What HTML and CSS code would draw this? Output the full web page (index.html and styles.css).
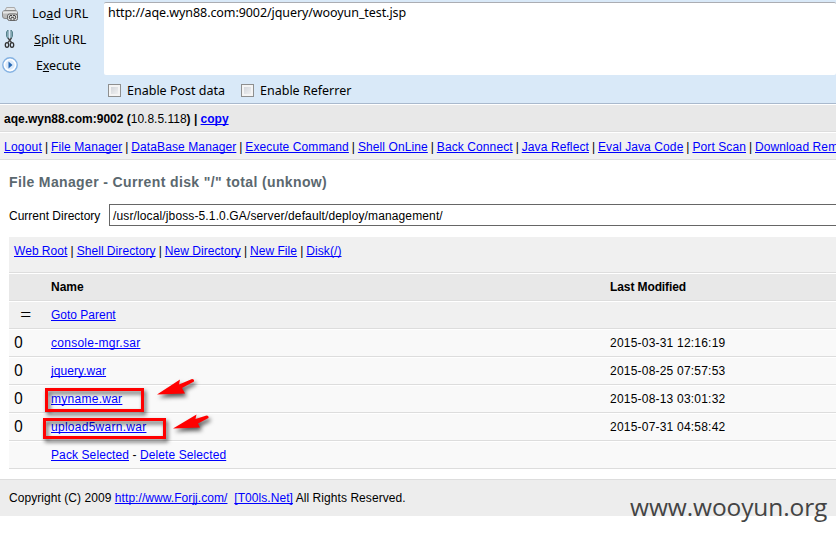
FILE: index.html
```html
<!DOCTYPE html>
<html lang="en">
<head>
<meta charset="utf-8">
<title>File Manager</title>
<link rel="stylesheet" href="styles.css">
</head>
<body>
<header class="hackbar">
  <div class="actions">
    <div class="action">
      <svg width="20" height="20" viewBox="0 0 20 20"><path d="M5 7 6.500 3.500h8L16 7" fill="#e6e7e8" stroke="#aaa"/><rect x="2.500" y="6.500" width="15" height="8" rx="2.500" fill="#bbb" stroke="#888"/><path d="M3 8.500h14" stroke="#e5e5e5" stroke-width="2"/><rect x="7.500" y="10" width="10" height="6.500" rx="2" fill="#ddd" stroke="#666"/><path d="M12 11.500h-2q-1.500 1.700 0 3.500h2m1-3.500h2q1.500 1.700 0 3.500h-2m-2-1.700h3" fill="none" stroke="#444"/></svg>
      <span class="load">Lo<u>a</u>d URL</span>
    </div>
    <div class="action">
      <svg width="20" height="20" viewBox="0 0 20 20"><path d="M6.500 2 8 0v8.500l-1.500-2zM12.500 2 11 0v8.500l1.500-2z" fill="#a9cbd1" stroke="#57818d"/><path d="m8 8 3.500 4.500m0-4.500L8 12.500" stroke="#444" stroke-width="1.300"/><ellipse cx="7" cy="15" rx="1.700" ry="2.300" fill="none" stroke="#333" stroke-width="1.300"/><ellipse cx="12" cy="15" rx="1.700" ry="2.300" fill="none" stroke="#333" stroke-width="1.300"/></svg>
      <span class="split"><u>S</u>plit URL</span>
    </div>
    <div class="action">
      <svg width="20" height="20" viewBox="0 0 20 20"><circle cx="10" cy="9" r="7.200" fill="#dceafa" stroke="#85b2e2" stroke-width="1.400"/><circle cx="10" cy="9" r="5.500" fill="none" stroke="#fff" stroke-width="1.500"/><path d="m8.500 5.500 4 3.500-4 3.500z" fill="#2869b4"/></svg>
      <span class="exec">E<u>x</u>ecute</span>
    </div>
  </div>
  <div class="request">
    <div class="url">http://aqe.wyn88.com:9002/jquery/wooyun_test.jsp</div>
    <div class="options">
      <span class="check"></span><span class="post">Enable Post data</span>
      <span class="check"></span><span class="referrer">Enable Referrer</span>
    </div>
  </div>
</header>
<div class="bar host"><b>aqe.wyn88.com:9002 (</b>10.8.5.118<b>) | <a class="copy" href="#">copy</a></b></div>
<nav class="bar menu"><a class="logout" href="#">Logout</a> | <a href="#">File Manager</a> | <a href="#">DataBase Manager</a> | <a href="#">Execute Command</a> | <a href="#">Shell OnLine</a> | <a href="#">Back Connect</a> | <a href="#">Java Reflect</a> | <a href="#">Eval Java Code</a> | <a href="#">Port Scan</a> | <a href="#">Download Rem</a></nav>
<main>
  <h2>File Manager - Current disk "/" total (unknow)</h2>
  <div class="directory"><span class="dirlabel">Current Directory</span><div class="path">/usr/local/jboss-5.1.0.GA/server/default/deploy/management/</div></div>
  <div class="files">
    <div class="tools"><a href="#">Web Root</a> | <a href="#">Shell Directory</a> | <a href="#">New Directory</a> | <a href="#">New File</a> | <a href="#">Disk(/)</a></div>
    <div class="row head"><span></span><span>Name</span><span class="modified">Last Modified</span></div>
    <div class="row parent"><span class="mark equals">=</span><span><a href="#">Goto Parent</a></span></div>
    <div class="row file"><span class="mark">0</span><span><a href="#">console-mgr.sar</a></span><span class="date">2015-03-31 12:16:19</span></div>
    <div class="row file"><span class="mark">0</span><span><a class="plain" href="#">jquery.war</a></span><span class="date">2015-08-25 07:57:53</span></div>
    <div class="row file"><span class="mark">0</span><span><a href="#">myname.war</a></span><span class="date">2015-08-13 03:01:32</span></div>
    <div class="row file"><span class="mark">0</span><span><a href="#">upload5warn.war</a></span><span class="date">2015-07-31 04:58:42</span></div>
    <div class="row"><span></span><span class="bulk"><a href="#">Pack Selected</a> - <a href="#">Delete Selected</a></span></div>
  </div>
</main>
<footer>Copyright (C) 2009 <a href="#">http://www.Forjj.com/</a> &nbsp;<a href="#">[T00ls.Net]</a> All Rights Reserved.</footer>
<svg class="marks" width="190" height="80" viewBox="0 0 190 80">
  <g class="shadowed">
    <path class="frame" d="M15.500 19.500h96v21h-96zM13.500 49.500h120v18h-120z"/>
    <path class="arrow" d="m126 24.500 23-15-1 5 13-5.500q2.500 0 2 2.500l-12 6.500 3 5.500z"/>
    <path class="arrow" d="m142 58.500 23.500-14-1 4.500 11-3.500q2.500 0 2 2.500l-10.500 5.500 2 4z"/>
  </g>
</svg>
<div class="watermark">www.wooyun.org</div>
</body>
</html>
```
FILE: styles.css
```css
* { box-sizing: border-box; }
body { margin: 0; width: 836px; height: 536px; overflow: hidden; position: relative; background: #fff; color: #000; font: 12px/26px "Liberation Sans", Arial, sans-serif; white-space: nowrap; }
a { color: #00f; text-decoration: underline; text-decoration-skip-ink: none; text-underline-offset: 1px; }
.hackbar { display: flex; height: 104px; background: #d9e9f8; border-bottom: 1px solid #a9b9cd; font: 12.5px/20px "Noto Sans", "Open Sans", sans-serif; }
.actions { width: 104px; padding-top: 4px; }
.action { display: flex; height: 26px; align-items: flex-start; }
.action svg { width: 20px; flex: none; }
.action span { display: block; }
.load { margin-left: 12px; letter-spacing: 0.1px; }
.split { margin-left: 14px; }
.exec { margin-left: 16px; letter-spacing: -0.15px; }
.request { flex: 1; padding-top: 2px; }
.url { height: 73px; padding: 0 4px; background: #fff; border-top: 1px solid #abadb3; border-radius: 2px; letter-spacing: -0.08px; }
.options { display: flex; align-items: center; height: 28px; padding: 3px 0 0 4px; }
.check { width: 13px; height: 13px; border: 1px solid #8e8f8f; background: linear-gradient(135deg, #cbcfd5, #f6f6f6); box-shadow: inset 0 0 0 2px #f4f4f4; }
.post { width: 98px; margin: 0 16px 0 6px; }
.referrer { margin-left: 6px; }
.bar { height: 28px; padding: 1px 4px 0; border-top: 1px solid #fff; border-bottom: 1px solid #ddd; line-height: 26px; }
.host { background: #e8e8e8; }
.menu { background: #f0f0f0; word-spacing: -0.4px; }
.menu a { word-spacing: 0; letter-spacing: 0.1px; }
.menu .logout { letter-spacing: 0.23px; }
main { height: 319px; padding: 10px 0 0 9px; }
h2 { margin: 0; height: 34px; font-size: 14px; line-height: 24px; letter-spacing: 0.37px; color: #5b686f; }
.directory { display: flex; height: 22px; line-height: 24px; }
.dirlabel { width: 100px; }
.path { flex: 1; padding-left: 3px; border: 1px solid #666; border-right: 0; line-height: 22px; letter-spacing: 0.13px; }
.files { margin-top: 11px; }
.tools { height: 36px; padding: 1px 5px; background: #f0f0f0; border-bottom: 1px solid #ddd; word-spacing: -0.3px; }
.tools a { letter-spacing: 0.08px; }
.row { display: grid; grid-template-columns: 42px 559px 1fr; height: 28px; background: #f9f9f9; border-top: 1px solid #fff; border-bottom: 1px solid #ddd; }
.head { background: #e8e8e8; font-weight: bold; }
.modified { letter-spacing: -0.1px; }
.parent { background: #f0f0f0; }
.file a { letter-spacing: 0.27px; }
.file .plain { letter-spacing: 0.06px; }
.date { letter-spacing: 0.21px; }
.bulk { letter-spacing: 0.1px; }
.mark { padding-left: 5px; font: 15.5px/24px "Noto Sans", sans-serif; }
.equals { padding-left: 11px; font: 300 20px/26px "Open Sans", sans-serif; }
footer { height: 37px; padding: 0 9px; background: #ededed; border-top: 1px solid #ddd; line-height: 36px; letter-spacing: 0.06px; }
.marks { position: absolute; left: 31px; top: 370px; }
.shadowed { filter: drop-shadow(2px 3px 2px rgba(0,0,0,.65)); }
.frame { fill: none; stroke: #f00; stroke-width: 3px; }
.arrow { fill: #f00; }
.watermark { position: absolute; left: 630px; top: 489px; font: 24.5px/36px "Open Sans", sans-serif; letter-spacing: -0.1px; color: #444; }
```
